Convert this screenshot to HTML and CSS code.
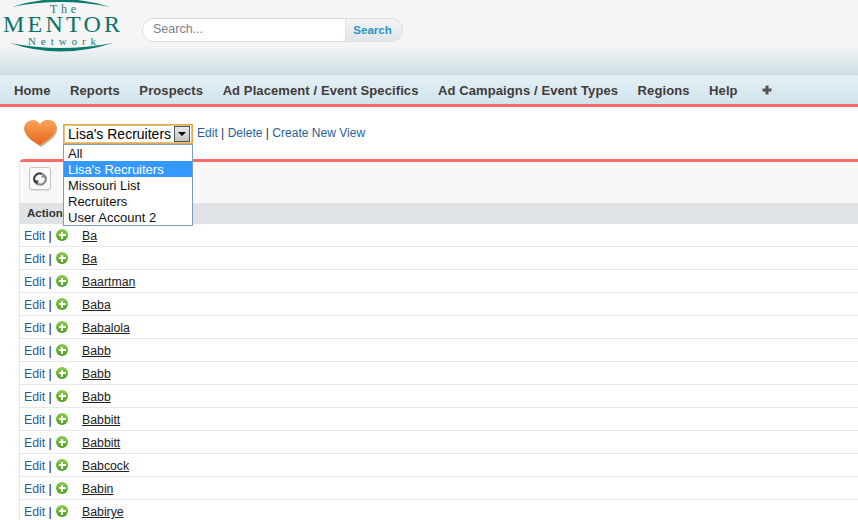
FILE: index.html
```html
<!DOCTYPE html>
<html lang="en">
<head>
<meta charset="utf-8">
<title>The Mentor Network</title>
<link rel="stylesheet" href="styles.css">
</head>
<body>
<header class="top">
  <svg class="logo" width="124" height="56" viewBox="0 0 124 56">
    <path class="swoosh" d="M12 7 Q60 -9 110 7 Q60 -3 12 7Z"/>
    <text class="logo-the" x="50" y="13" textLength="26">The</text>
    <text class="logo-main" x="3" y="32" textLength="117">MENTOR</text>
    <text class="logo-net" x="28" y="45" textLength="68">Network</text>
    <path class="swoosh" d="M10 43 Q60 60 113 43 Q60 53 10 43Z"/>
  </svg>
  <form class="search">
    <span class="search-input">Search...</span>
    <span class="search-btn">Search</span>
  </form>
</header>
<nav class="nav">
  <a>Home</a><a>Reports</a><a>Prospects</a><a>Ad Placement / Event Specifics</a><a>Ad Campaigns / Event Types</a><a>Regions</a><a>Help</a>
  <svg class="plus" width="10" height="10" viewBox="0 0 10 10"><path d="M3.500 0.500h3v3h3v3h-3v3h-3v-3h-3v-3h3z"/></svg>
</nav>
<section class="views">
  <svg class="heart" width="36" height="32" viewBox="0 0 36 32">
    <defs>
      <linearGradient id="hg" x1="0" y1="0" x2="0" y2="1"><stop offset="0" stop-color="#f7a65a"/><stop offset="1" stop-color="#e8651c"/></linearGradient>
    </defs>
    <path fill="#c9b28f" d="M18 30 C12 26 3 21 2 13 C2 7 7 4 11 5 C14 5.500 16 7 18 9 C20 6 24 4 28 5 C33 6 35 10 34 14 C33 20 24 26 18 30Z"/>
    <path fill="url(#hg)" d="M17 28 C11 25 2 20 1 12 C1 6 6 3 10 3 C13 3 15 5 17 7 C19 4 23 2 27 3 C32 4 34 8 33 12 C32 18 23 24 17 28Z"/>
  </svg>
  <div class="select-wrap">
    <div class="select">
      <span class="select-value">Lisa's Recruiters</span>
      <span class="select-arrow"></span>
    </div>
    <ul class="options">
      <li>All</li>
      <li class="selected">Lisa's Recruiters</li>
      <li>Missouri List</li>
      <li>Recruiters</li>
      <li>User Account 2</li>
    </ul>
  </div>
  <div class="view-links"><a>Edit</a> | <a>Delete</a> | <a>Create New View</a></div>
</section>
<section class="panel">
  <div class="toolbar">
    <span class="refresh">
      <svg width="16" height="16" viewBox="0 0 16 16">
        <path class="r1" d="M10 2.900A5.500 5.500 0 0 0 3.600 11.500"/>
        <path class="r1-head" d="M1.300 9.300L6.800 9.600L5 14.600z"/>
        <path class="r2" d="M6 13.100A5.500 5.500 0 0 0 12.400 4.500"/>
        <path class="r2-head" d="M14.700 6.700L9.200 6.400L11 1.400z"/>
      </svg>
    </span>
  </div>
  <div class="head">Action</div>
  <div class="rows">
    <div class="row"><span class="actions"><a>Edit</a> |</span><span class="add"></span><a class="name">Ba</a></div>
    <div class="row"><span class="actions"><a>Edit</a> |</span><span class="add"></span><a class="name">Ba</a></div>
    <div class="row"><span class="actions"><a>Edit</a> |</span><span class="add"></span><a class="name">Baartman</a></div>
    <div class="row"><span class="actions"><a>Edit</a> |</span><span class="add"></span><a class="name">Baba</a></div>
    <div class="row"><span class="actions"><a>Edit</a> |</span><span class="add"></span><a class="name">Babalola</a></div>
    <div class="row"><span class="actions"><a>Edit</a> |</span><span class="add"></span><a class="name">Babb</a></div>
    <div class="row"><span class="actions"><a>Edit</a> |</span><span class="add"></span><a class="name">Babb</a></div>
    <div class="row"><span class="actions"><a>Edit</a> |</span><span class="add"></span><a class="name">Babb</a></div>
    <div class="row"><span class="actions"><a>Edit</a> |</span><span class="add"></span><a class="name">Babbitt</a></div>
    <div class="row"><span class="actions"><a>Edit</a> |</span><span class="add"></span><a class="name">Babbitt</a></div>
    <div class="row"><span class="actions"><a>Edit</a> |</span><span class="add"></span><a class="name">Babcock</a></div>
    <div class="row"><span class="actions"><a>Edit</a> |</span><span class="add"></span><a class="name">Babin</a></div>
    <div class="row"><span class="actions"><a>Edit</a> |</span><span class="add"></span><a class="name">Babirye</a></div>
  </div>
</section>
</body>
</html>
```
FILE: styles.css
```css
* { box-sizing: border-box; }
html, body { margin: 0; height: 520px; overflow: hidden; background: #fff; }
body { font-family: "Liberation Sans", Arial, sans-serif; font-size: 12px; color: #222; }
a { color: #1f5f96; }

.top {
  height: 75px;
  display: flex;
  align-items: flex-start;
  background: linear-gradient(#f5f5f5 0, #f5f5f5 45px, #cfe0e6 75px);
}
.logo { flex: none; display: block; margin-right: 18px; }
.swoosh { fill: #0b7a6e; }
.logo-the { font: 12px "Liberation Serif", serif; fill: #1c7d73; }
.logo-main { font: 24px "Liberation Serif", serif; fill: #0b7468; }
.logo-net { font: 11px "Liberation Serif", serif; fill: #1c7d73; }

.search {
  margin: 18px 0 0;
  width: 261px;
  height: 24px;
  display: flex;
  border: 1px solid #dcdcdc;
  border-radius: 12px;
  overflow: hidden;
  box-shadow: inset 0 1px 2px #ccc;
}
.search-input {
  width: 203px;
  padding-left: 10px;
  background: #fff;
  color: #80808a;
  font-size: 12.500px;
  line-height: 21px;
  border-right: 1px solid #e0e0e0;
}
.search-btn {
  flex: 1;
  text-align: center;
  padding-right: 3px;
  background: linear-gradient(#f2f4f5, #dfe6e9);
  color: #2a95c5;
  font-weight: bold;
  font-size: 11.500px;
  line-height: 22px;
}

.nav {
  height: 32px;
  display: flex;
  align-items: center;
  gap: 19.500px;
  padding: 1px 0 0 14px;
  border-radius: 4px 0 0 0;
  border-bottom: 3px solid #ff6b6b;
  background: linear-gradient(#e5f0f5, #cfe4ec);
  box-shadow: 0 -1px 1px #c3d5dc;
  font-size: 13px;
  font-weight: bold;
  color: #423b3b;
  letter-spacing: 0.100px;
}
.nav a { color: #423b3b; }
.plus { fill: #555; margin-left: 5px; }

.views {
  height: 52px;
  position: relative;
  display: flex;
  align-items: flex-start;
  padding-left: 23px;
  background: #fff;
}
.heart { flex: none; margin: 10px 4px 0 0; }
.select-wrap { position: relative; width: 130px; margin: 17px 4px 0 0; flex: none; }
.select {
  height: 20px;
  display: flex;
  align-items: center;
  justify-content: space-between;
  border: 1px solid #e0a850;
  box-shadow: inset 0 0 0 1px #e8c27a;
  padding: 0 2px 0 4px;
  font-size: 14px;
  color: #000;
}
.select-arrow {
  width: 16px;
  height: 16px;
  background: linear-gradient(#e8e8e8, #c4c4c4);
  border: 1px solid #555;
  position: relative;
}
.select-arrow::after {
  content: "";
  position: absolute;
  left: 3px;
  top: 5px;
  border-left: 4px solid transparent;
  border-right: 4px solid transparent;
  border-top: 4px solid #000;
}
.options {
  position: absolute;
  z-index: 5;
  left: 0;
  top: 20px;
  width: 130px;
  margin: 0;
  padding: 0;
  list-style: none;
  background: #fff;
  border: 1px solid #7f9db9;
  font-size: 13px;
  color: #111;
}
.options li { height: 16px; line-height: 17px; padding-left: 4px; }
.options .selected { background: #3399ff; color: #fff; }
.view-links { margin-top: 19px; font-size: 12px; letter-spacing: 0.020px; color: #1b2f60; line-height: 15px; }
.view-links a { color: #1f5f96; }

.panel {
  margin-left: 19px;
  border-top: 3px solid #ff6b6b;
  border-left: 1px solid #e6e6e6;
  border-radius: 5px 0 0 0;
}
.toolbar { height: 41px; background: #f8f8f8; padding: 5px 0 0 9px; }
.refresh {
  display: flex;
  align-items: center;
  justify-content: center;
  width: 22px;
  height: 23px;
  border: 1px solid #c4c4c4;
  border-radius: 3px;
  background: #fafafa;
  box-shadow: 0 1px 1px #ddd;
}
.r1 { fill: none; stroke: #444; stroke-width: 2.200px; }
.r2 { fill: none; stroke: #8a8a8a; stroke-width: 2.200px; }
.r1-head { fill: #444; }
.r2-head { fill: #8a8a8a; }
.head {
  height: 21px;
  background: #dfe3e6;
  padding-left: 7px;
  font-weight: bold;
  font-size: 11.500px;
  line-height: 20px;
  color: #333;
}
.row {
  height: 23px;
  display: flex;
  align-items: center;
  padding: 2px 0 0 4px;
  border-bottom: 1px solid #e8e8e8;
  color: #222;
  font-size: 12.300px;
}
.actions { width: 32px; white-space: nowrap; }
.add {
  width: 12px;
  height: 12px;
  margin: -2px 14px 0 0;
  border-radius: 50%;
  background:
    linear-gradient(#fff, #fff) center / 7px 2px no-repeat,
    linear-gradient(#fff, #fff) center / 2px 7px no-repeat,
    linear-gradient(#8ccb50, #4e9e20);
  flex: none;
}
.name { color: #222; text-decoration: underline; }
```
